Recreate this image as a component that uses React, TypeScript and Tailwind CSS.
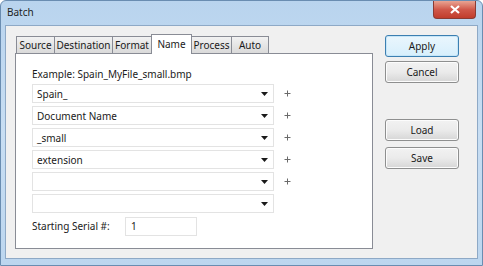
import React from 'react';

const FONT = { fontFamily: '"Noto Sans", "Open Sans", sans-serif' };

const TABS = ['Source', 'Destination', 'Format', 'Name', 'Process', 'Auto'];
const TAB_WIDTHS: Record<string, string> = {
  Source: 'w-[39px]',
  Destination: 'w-[59px]',
  Format: 'w-[40px]',
  Name: 'w-[41px]',
  Process: 'w-[41px]',
  Auto: 'w-[38px]',
};

const PARTS = [
  { value: 'Spain_', plus: true },
  { value: 'Document Name', plus: true },
  { value: '_small', plus: true },
  { value: 'extension', plus: true },
  { value: '', plus: true },
  { value: '', plus: false },
];

const Combo: React.FC<{ value: string; plus: boolean }> = ({ value, plus }) => (
  <div className="flex items-center h-[19px]">
    <div className="w-[242px] h-[19px] bg-white border border-[#e3e3e3] flex items-center justify-between pl-[4px] pr-[5px]">
      <span className="text-[10px] leading-none text-[#1a1a1a]">{value}</span>
      <svg width="7" height="4" viewBox="0 0 7 4">
        <path d="M0 0 H7 L3.5 4 Z" fill="#1a1a1a" />
      </svg>
    </div>
    {plus && (
      <svg className="ml-[10px]" width="7" height="7" viewBox="0 0 7 7">
        <path d="M3.5 0.5 V6.5 M0.5 3.5 H6.5" stroke="#6a6a6a" strokeWidth="1" />
      </svg>
    )}
  </div>
);

const Button: React.FC<{ label: string; primary?: boolean; className?: string }> = ({ label, primary, className }) => (
  <div
    className={`w-[74px] h-[22px] rounded-[3px] flex items-center justify-center text-[10px] text-[#1a1a1a] border ${
      primary
        ? 'border-[#3c7fb1] bg-gradient-to-b from-[#eaf6fd] to-[#d7effc] shadow-[inset_0_0_0_1px_#c6e6f8]'
        : 'border-[#8e8f8f] bg-gradient-to-b from-[#f2f2f2] via-[#ebebeb] to-[#d6d6d6] shadow-[inset_0_0_0_1px_#fcfcfc]'
    } ${className ?? ''}`}
  >
    {label}
  </div>
);

const App: React.FC = () => {
  return (
    <div
      className="w-[483px] h-[266px] bg-gradient-to-b from-[#b9d4ee] via-[#c8def3] to-[#bcd6ef] border border-[#6a8db1] rounded-t-[6px] flex flex-col overflow-hidden"
      style={FONT}
    >
      {/* title bar */}
      <div className="h-[24px] flex items-start justify-between">
        <span className="ml-[6px] mt-[6px] text-[10px] leading-none text-[#1e1e1e]">Batch</span>
        <div className="mr-[6px] w-[43px] h-[18px] rounded-b-[4px] border border-t-0 border-[#8a3b33] bg-gradient-to-b from-[#e8a493] via-[#d0584a] to-[#c13c2c] flex items-center justify-center">
          <svg width="10" height="9" viewBox="0 0 10 9">
            <path d="M1 1 L9 8 M9 1 L1 8" stroke="#fff" strokeWidth="2.2" />
          </svg>
        </div>
      </div>

      {/* client area */}
      <div className="mx-[4px] mb-[6px] flex-1 border border-[#8ea9c6] bg-[#f0f0f0] flex">
        {/* left column: tabs + panel */}
        <div className="ml-[9px] mt-[8px] w-[358px] flex flex-col">
          <div className="ml-[1px] flex items-end h-[19px]">
            {TABS.map((t) =>
              t === 'Name' ? (
                <div
                  key={t}
                  className={`${TAB_WIDTHS[t]} h-[20px] -mb-px -ml-px relative z-10 bg-white border border-b-0 border-[#898c95] flex items-start justify-center pt-[2px] text-[10px] leading-[14px] whitespace-nowrap text-[#1a1a1a]`}
                >
                  {t}
                </div>
              ) : (
                <div
                  key={t}
                  className={`${TAB_WIDTHS[t]} h-[17px] -ml-px first:ml-0 bg-gradient-to-b from-[#f2f2f2] to-[#dadada] border border-b-0 border-[#898c95] flex items-center justify-center text-[10px] leading-none whitespace-nowrap text-[#1a1a1a]`}
                >
                  {t}
                </div>
              )
            )}
          </div>
          <div className="h-[196px] bg-white border border-[#898c95] pl-[16px] pt-[12px]">
            <div className="h-[16px] text-[10px] leading-[16px] whitespace-nowrap text-[#1a1a1a]">Example: Spain_MyFile_small.bmp</div>
            <div className="mt-[2px] flex flex-col gap-[3px]">
              {PARTS.map((p, i) => (
                <Combo key={i} value={p.value} plus={p.plus} />
              ))}
            </div>
            <div className="mt-[4px] flex items-center">
              <span className="w-[93px] text-[10px] whitespace-nowrap text-[#1a1a1a]">Starting Serial #:</span>
              <div className="w-[72px] h-[19px] border border-[#e3e3e3] bg-white flex items-center pl-[5px] text-[10px] text-[#1a1a1a]">
                1
              </div>
            </div>
          </div>
        </div>

        {/* right column: buttons */}
        <div className="ml-[12px] mt-[9px] flex flex-col">
          <Button label="Apply" primary />
          <Button label="Cancel" className="mt-[4px]" />
          <Button label="Load" className="mt-[36px]" />
          <Button label="Save" className="mt-[6px]" />
        </div>
      </div>
    </div>
  );
};

export default App;
